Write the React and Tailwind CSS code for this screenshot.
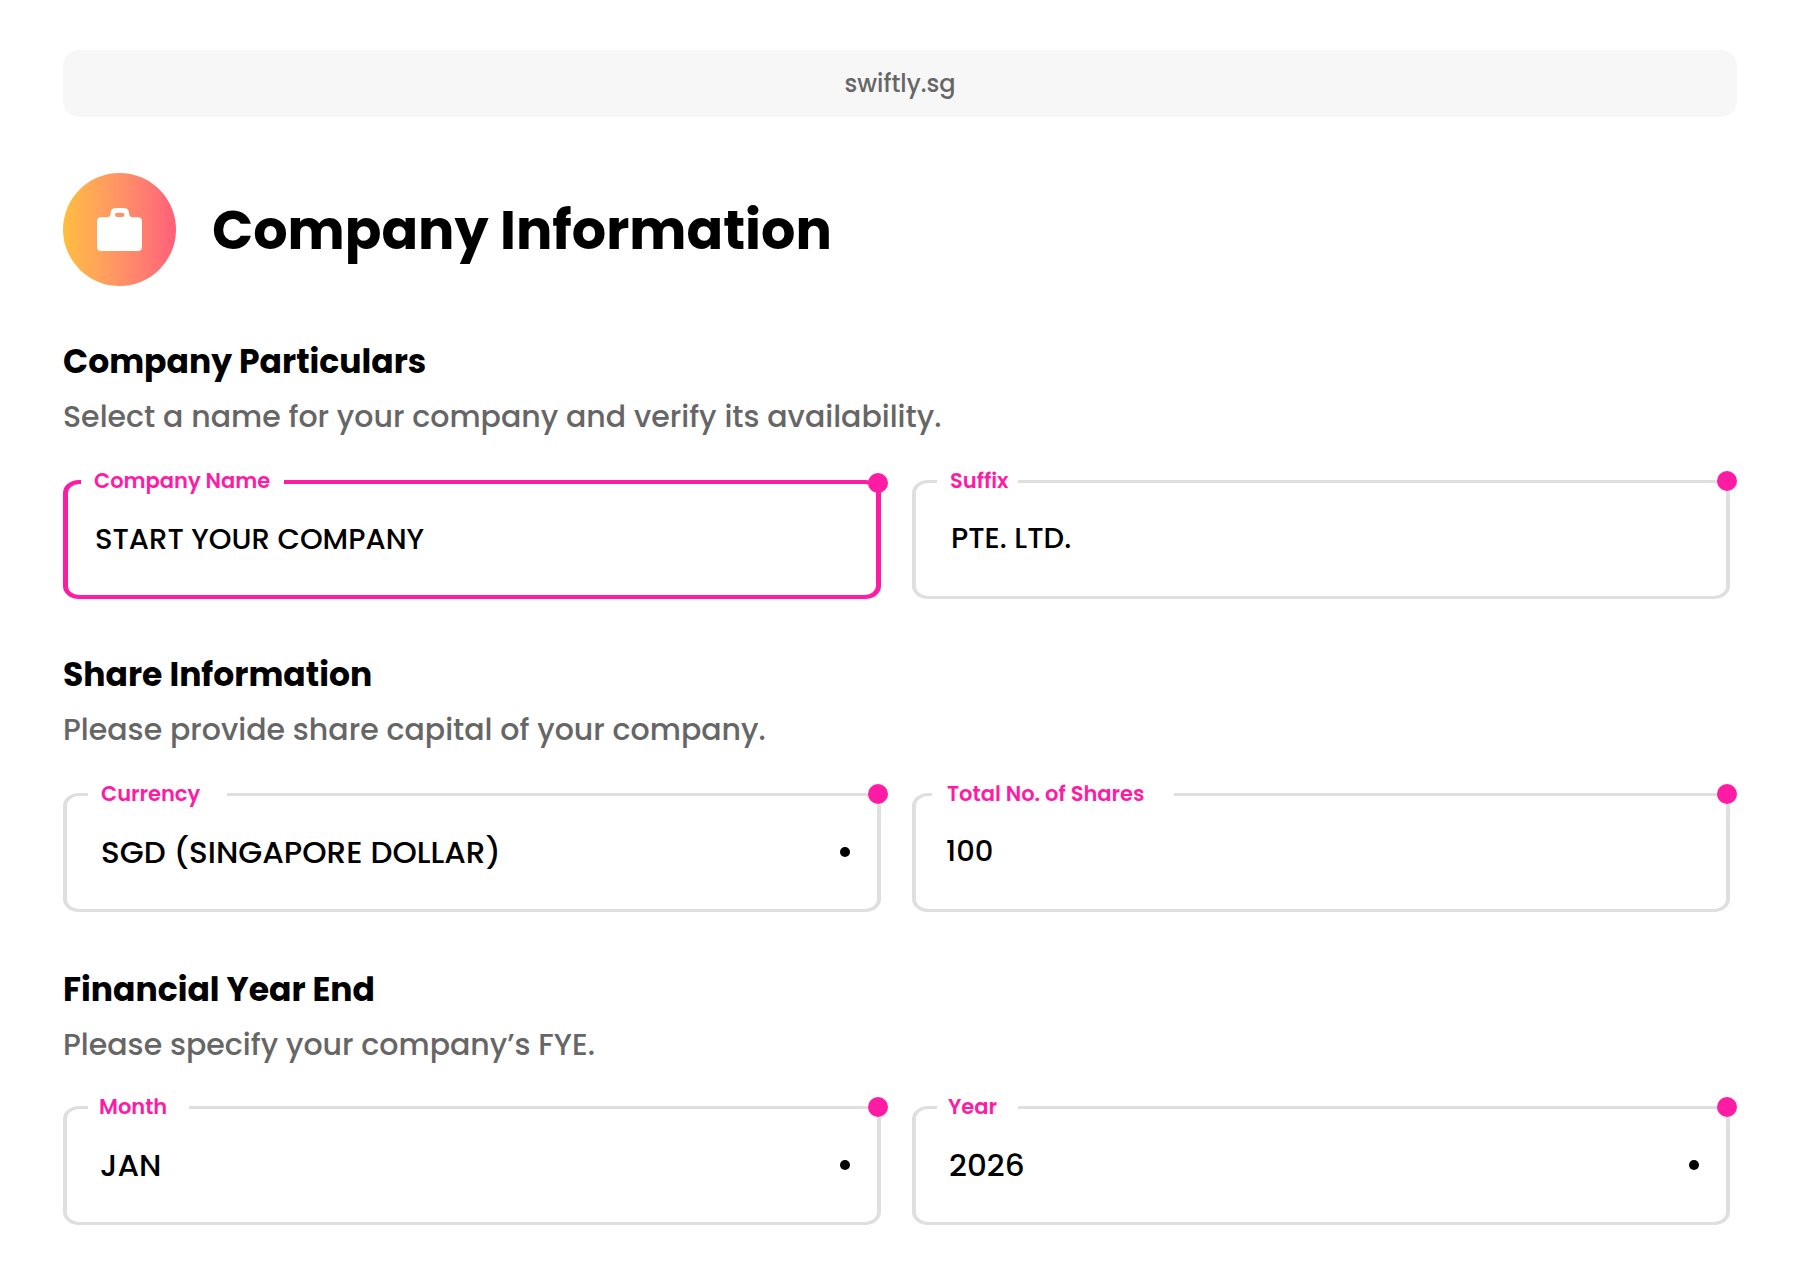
import React from "react";

function BriefcaseIcon() {
  return (
    <svg viewBox="0 0 135 129" className="h-[43px] w-[45px]" fill="white" aria-hidden="true">
      <path
        fillRule="evenodd"
        d="M12 28h16q13 0 13-12Q41 0 57 0h22q17 0 17 16 0 12 12 12h15q12 0 12 12v77q0 12-12 12H12q-12 0-12-12V40q0-12 12-12ZM61 14q-7 0-7 6.500t7 6.500h14q7 0 7-6.500t-7-6.500Z"
      />
    </svg>
  );
}

function Field({ id, label, value, select, active, notch, inset, options }) {
  const border = active ? "border-x-[5px] border-y-4 border-[#ff1ca5]" : "border-x-4 border-y-3 border-[#dfdfdf]";
  return (
    <div className="relative h-[119px]">
      <div className={`flex h-full rounded-[16px/13px] ${border}`}>
        {select ? (
          <select
            id={id}
            defaultValue={value}
            className={`w-full appearance-none bg-transparent text-[31px] font-medium text-black outline-none ${inset}`}
          >
            {options.map((o) => (
              <option key={o}>{o}</option>
            ))}
          </select>
        ) : (
          <input
            id={id}
            type="text"
            defaultValue={value}
            className={`w-full bg-transparent text-[29px] font-medium text-black outline-none ${active ? "" : "pb-0.5"} ${inset}`}
          />
        )}
      </div>
      <label
        htmlFor={id}
        className={`absolute -top-3 whitespace-nowrap bg-white text-[21px] leading-[26px] font-semibold text-[#ff1ca5] ${notch}`}
      >
        {label}
      </label>
      <span className={`absolute -right-[7px] size-5 rounded-full bg-[#ff1ca5] ${active ? "-top-[7px]" : "-top-[9px]"}`} />
      {select && <span className="pointer-events-none absolute top-[54px] right-[31px] size-[10px] rounded-full bg-black" />}
    </div>
  );
}

function Section({ title, text, className, gap = "mt-[44px]", children }) {
  return (
    <section className={className}>
      <h2 className="text-[33px] leading-[40px] font-bold text-black">{title}</h2>
      <p className="mt-4 text-[30px] leading-[38px] font-medium text-[#666666]">{text}</p>
      <div className={`grid grid-cols-2 gap-[31px] ${gap}`}>{children}</div>
    </section>
  );
}

export default function App() {
  return (
    <main className="min-h-screen bg-white px-[63px] pt-[50px] pb-[59px] font-['Poppins','Inter',sans-serif]">
      <div className="flex h-[67px] items-center justify-center rounded-2xl bg-[#f7f7f7]">
        <a href="#" className="text-2xl font-medium text-[#666666]">
          swiftly.sg
        </a>
      </div>
      <header className="mt-14 flex items-center gap-9">
        <div className="flex size-[113px] items-center justify-center rounded-full bg-linear-to-r from-[#ffbe3d] to-[#ff5e7a]">
          <BriefcaseIcon />
        </div>
        <h1 className="text-[54px] leading-[64px] font-bold text-black">Company Information</h1>
      </header>
      <form className="mt-14 mr-[7px]">
        <Section title="Company Particulars" text="Select a name for your company and verify its availability.">
          <Field id="name" label="Company Name" value="START YOUR COMPANY" active notch="left-[18px] w-[203px] pl-[13px]" inset="pl-[27px]" />
          <Field id="suffix" label="Suffix" value="PTE. LTD." notch="left-[25px] w-[81px] pl-[13px]" inset="pl-[35px]" />
        </Section>
        <Section className="mt-14" title="Share Information" text="Please provide share capital of your company.">
          <Field id="currency" label="Currency" value="SGD (SINGAPORE DOLLAR)" select options={["SGD (SINGAPORE DOLLAR)"]} notch="left-[25px] w-[139px] pl-[13px]" inset="pl-[34px]" />
          <Field id="shares" label="Total No. of Shares" value="100" notch="left-[20px] w-[242px] pl-[15px]" inset="pl-[30px]" />
        </Section>
        <Section className="mt-[58px]" gap="mt-[42px]" title="Financial Year End" text="Please specify your company’s FYE.">
          <Field id="month" label="Month" value="JAN" select options={["JAN"]} notch="left-[25px] w-[101px] pl-[11px]" inset="pl-[33px]" />
          <Field id="year" label="Year" value="2026" select options={["2026"]} notch="left-[25px] w-[81px] pl-[11px]" inset="pl-[33px]" />
        </Section>
      </form>
    </main>
  );
}
